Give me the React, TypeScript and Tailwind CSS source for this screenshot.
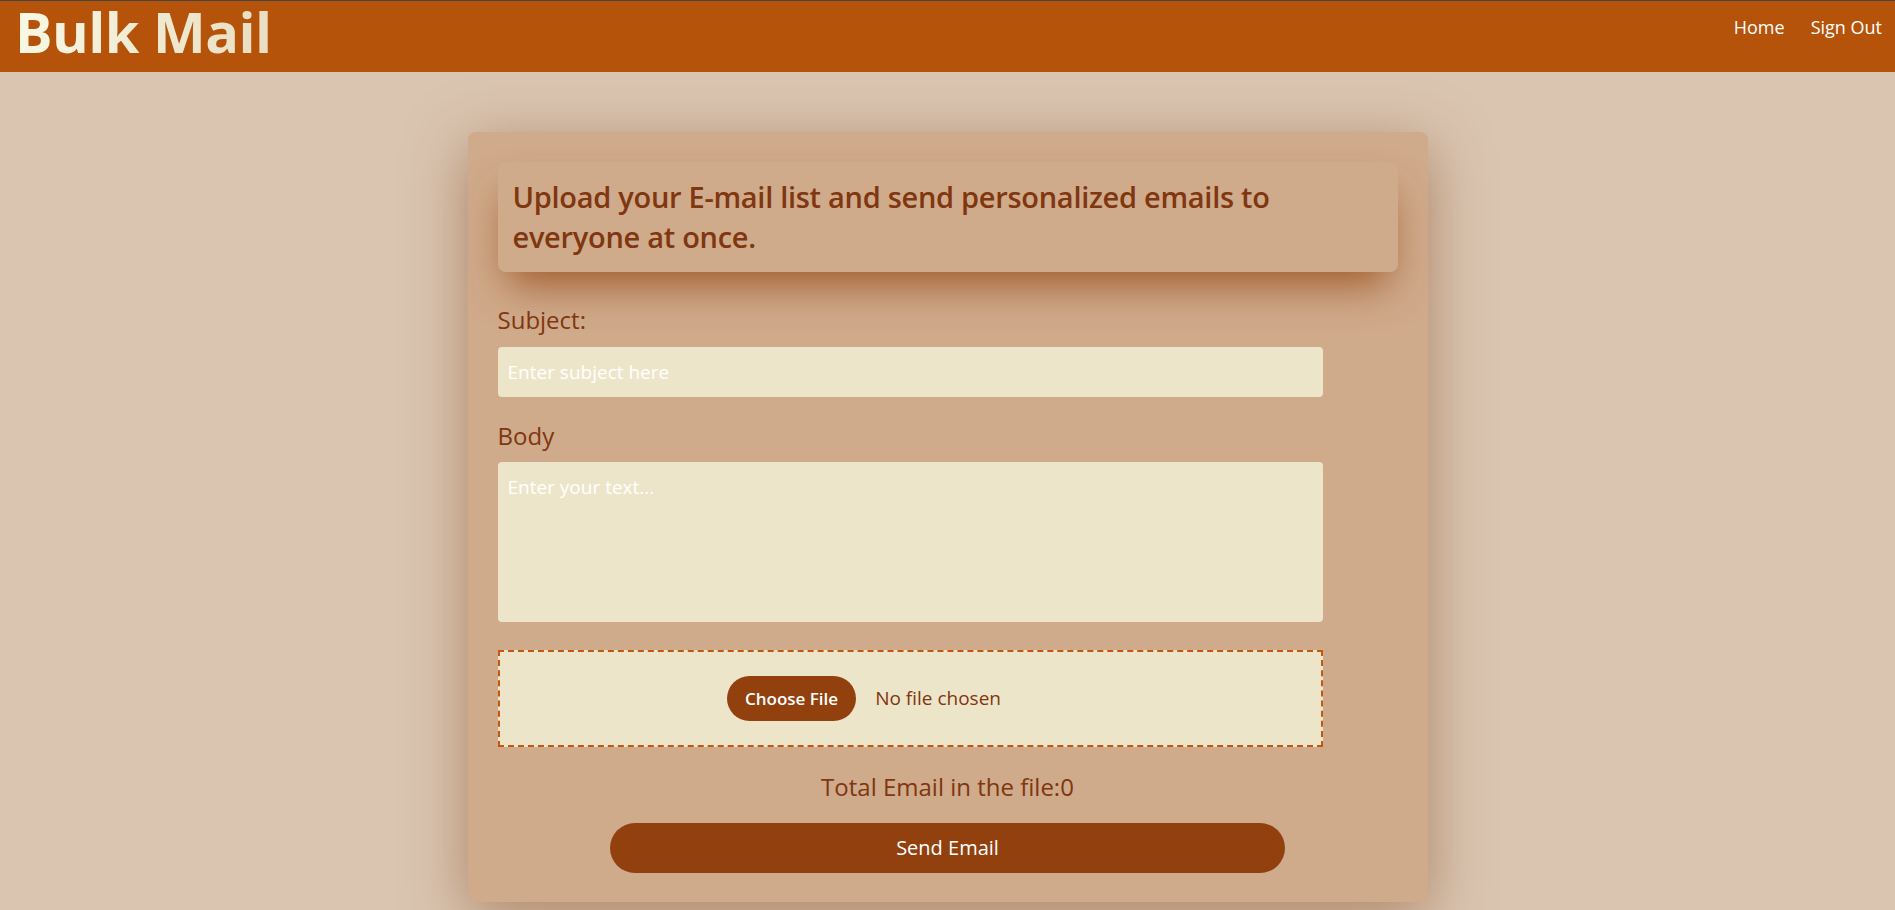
import React from "react";

export default function App() {
  return (
    <div className="min-h-screen bg-[#dac5b1] font-['Open_Sans',sans-serif]">
      <nav className="h-[72px] bg-[#b45309] border-t border-[#454545] flex justify-between items-start">
        <h1 className="pl-[15px] text-[56px] leading-[60px] font-bold tracking-[-0.01em] bg-gradient-to-r from-[#f9fae6] to-[#e9ddc2] bg-clip-text text-transparent">
          Bulk Mail
        </h1>
        <div className="flex gap-[26px] pr-[13px] pt-3 text-lg text-white">
          <a href="#">Home</a>
          <a href="#">Sign Out</a>
        </div>
      </nav>

      <main className="pt-[60px] pb-10">
        <div className="w-[960px] mx-auto bg-[#cfaa8b] rounded-lg p-[30px] pb-[29px] shadow-[0_14px_60px_rgba(130,70,30,0.5)]">
          <div className="rounded-lg bg-[#cfab8c] p-[15px] shadow-[0_22px_40px_-10px_rgba(150,75,25,0.85)]">
            <h2 className="text-[29px] leading-10 font-semibold tracking-[-0.01em] text-[#80360f]">
              Upload your E-mail list and send personalized emails to everyone at once.
            </h2>
          </div>

          <label className="block mt-8 text-2xl text-[#80360f]">Subject:</label>
          <input
            type="text"
            placeholder="Enter subject here"
            className="mt-[11px] block w-11/12 h-[50px] rounded bg-[#ede5c9] px-[10px] text-[19px] outline-none placeholder:text-white"
          />

          <label className="block mt-[23px] text-2xl text-[#80360f]">Body</label>
          <textarea
            placeholder="Enter your text..."
            className="mt-[10px] block w-11/12 h-[160px] resize-none rounded bg-[#ede5c9] px-[10px] pt-[11px] text-[19px] leading-7 outline-none placeholder:text-white"
          />

          <div className="mt-[28px] w-11/12 h-[97px] border-2 border-dashed border-[#c2570f] bg-[#ede5c9] flex items-center justify-center">
            <div className="w-[366px] flex items-center gap-[19px]">
              <button className="h-[45px] px-[18px] rounded-full bg-[#92400e] text-white text-[17px] font-semibold">
                Choose File
              </button>
              <span className="text-[19px] text-[#80360f]">No file chosen</span>
            </div>
          </div>

          <p className="mt-6 text-center text-2xl text-[#80360f]">Total Email in the file:0</p>

          <button className="mt-5 mx-auto block w-3/4 h-[50px] rounded-full bg-[#92400e] text-white text-xl">
            Send Email
          </button>
        </div>
      </main>
    </div>
  );
}
